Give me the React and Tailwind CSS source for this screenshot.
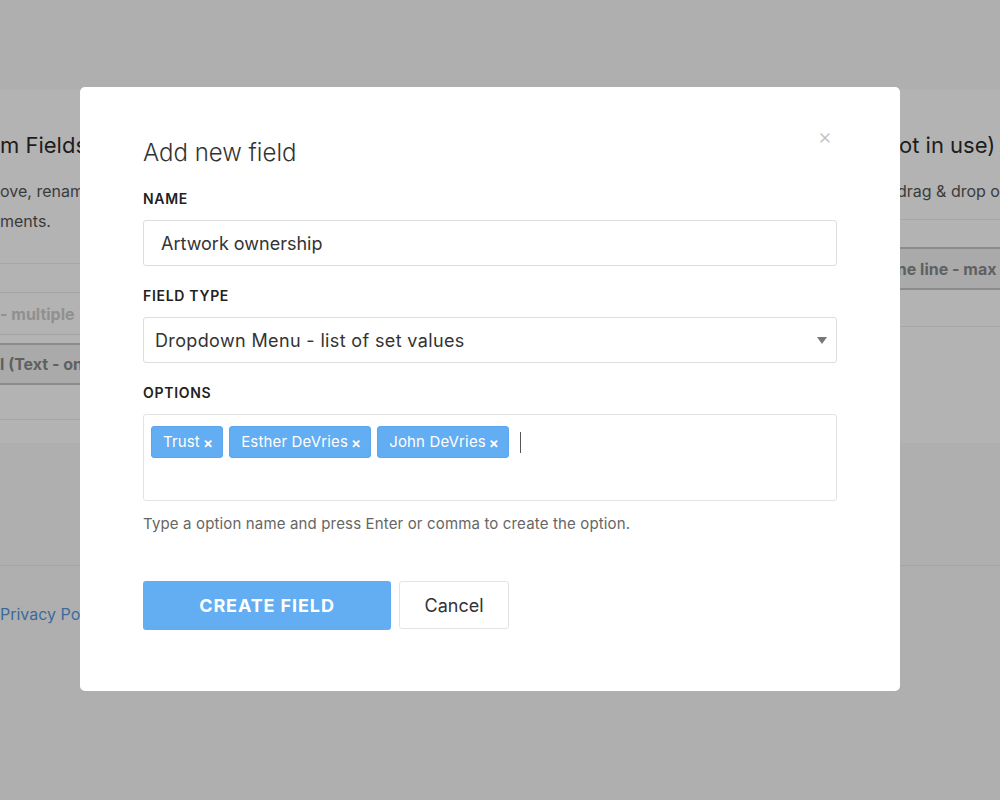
import React from 'react';

const font = { fontFamily: 'Inter, "Noto Sans", sans-serif' };

function Tag({ label }) {
  return (
    <span className="flex h-[32px] items-center gap-[3px] rounded-[3px] border border-[#5ba6ec] bg-[#63adf2] pl-[11px] pr-[9px] text-[15px] tracking-[0.01em] text-white">
      {label}
      <span className="text-[15px] font-semibold leading-none">×</span>
    </span>
  );
}

function Label({ children }) {
  return <div className="text-[14px] font-semibold leading-[20px] tracking-[0.05em] text-[#222]">{children}</div>;
}

// page behind the modal, drawn already dimmed by the backdrop
export default function App() {
  return (
    <div className="relative h-[800px] w-full overflow-hidden bg-[#afafaf] pt-[90px]" style={font}>
      <div className="flex h-[353px] bg-[#b3b3b3]">
        <div className="w-[440px]">
          <div className="pt-[40px] text-[22px] leading-[30px] text-[#1d1d1d]">m Fields</div>
          <div className="mt-[16px] text-[16px] leading-[30px] text-[#3b3b3b]">
            ove, rename
            <br />
            ments.
          </div>
          <div className="mt-[27px] border-t border-[#a7a7a7]" />
          <div className="mt-[28px] flex h-[43px] items-center border-y border-[#a3a3a3] text-[16px] font-bold text-[#909090]">
            - multiple
          </div>
          <div className="mt-[8px] flex h-[42px] items-center border-y-2 border-[#8c8c8c] bg-[#aaaaaa] text-[16px] font-bold text-[#606060]">
            l (Text - one line)
          </div>
          <div className="mt-[34px] border-t border-[#a7a7a7]" />
        </div>
        <div className="ml-auto w-[124px]">
          <div className="whitespace-nowrap pl-[10px] pt-[40px] text-[22px] leading-[30px] text-[#1d1d1d]">not in use)</div>
          <div className="mt-[16px] whitespace-nowrap pl-[21px] text-[16px] leading-[30px] text-[#3b3b3b]">drag &amp; drop o</div>
          <div className="mt-[13px] border-t border-[#a7a7a7]" />
          <div className="mt-[27px] flex h-[43px] items-center whitespace-nowrap border-y-2 border-[#8c8c8c] bg-[#aaaaaa] text-[16px] font-bold text-[#606060]">
            <span className="pl-[11px]">one line - max</span>
          </div>
          <div className="mt-[36px] border-t border-[#a7a7a7]" />
        </div>
      </div>
      <div className="mt-[122px] border-t border-[#a5a5a5]" />
      <div className="mt-[36px] text-[16px] text-[#3c6a9c]">Privacy Policy</div>

      {/* modal */}
      <div className="absolute left-[80px] top-[87px] h-[604px] w-[820px] rounded-[5px] bg-white px-[63px] pt-[50px]">
        <button className="absolute right-[68px] top-[38px] text-[22px] font-light leading-none text-[#c2c2c2]">×</button>
        <h2 className="text-[24px] font-light leading-[32px] text-[#333]">Add new field</h2>

        <div className="mt-[20px]">
          <Label>NAME</Label>
        </div>
        <div className="mt-[11px] flex h-[46px] items-center rounded-[3px] border border-[#ddd] px-[17px] text-[18px] text-[#333]">
          Artwork ownership
        </div>

        <div className="mt-[20px]">
          <Label>FIELD TYPE</Label>
        </div>
        <div className="mt-[11px] flex h-[46px] items-center justify-between rounded-[3px] border border-[#ddd] pl-[11px] pr-[9px] text-[18px] tracking-[0.02em] text-[#333]">
          <span>Dropdown Menu - list of set values</span>
          <svg width="10" height="7" viewBox="0 0 10 7">
            <path d="M0 0 L10 0 L5 7 Z" fill="#777" />
          </svg>
        </div>

        <div className="mt-[20px]">
          <Label>OPTIONS</Label>
        </div>
        <div className="mt-[11px] h-[87px] rounded-[3px] border border-[#e3e3e3] px-[7px] pt-[11px]">
          <div className="flex items-center gap-[6px]">
            <Tag label="Trust" />
            <Tag label="Esther DeVries" />
            <Tag label="John DeVries" />
            <span className="ml-[5px] h-[21px] w-px bg-[#555]" />
          </div>
        </div>
        <div className="mt-[13px] text-[15px] leading-[20px] tracking-[0.01em] text-[#666]">
          Type a option name and press Enter or comma to create the option.
        </div>

        <div className="mt-[47px] flex gap-[8px]">
          <button className="h-[49px] w-[248px] rounded-[3px] bg-[#63adf2] text-[18px] font-bold tracking-[0.05em] text-white">
            CREATE FIELD
          </button>
          <button className="h-[48px] w-[110px] rounded-[3px] border border-[#e3e3e3] bg-white text-[18px] text-[#333]">
            Cancel
          </button>
        </div>
      </div>
    </div>
  );
}
